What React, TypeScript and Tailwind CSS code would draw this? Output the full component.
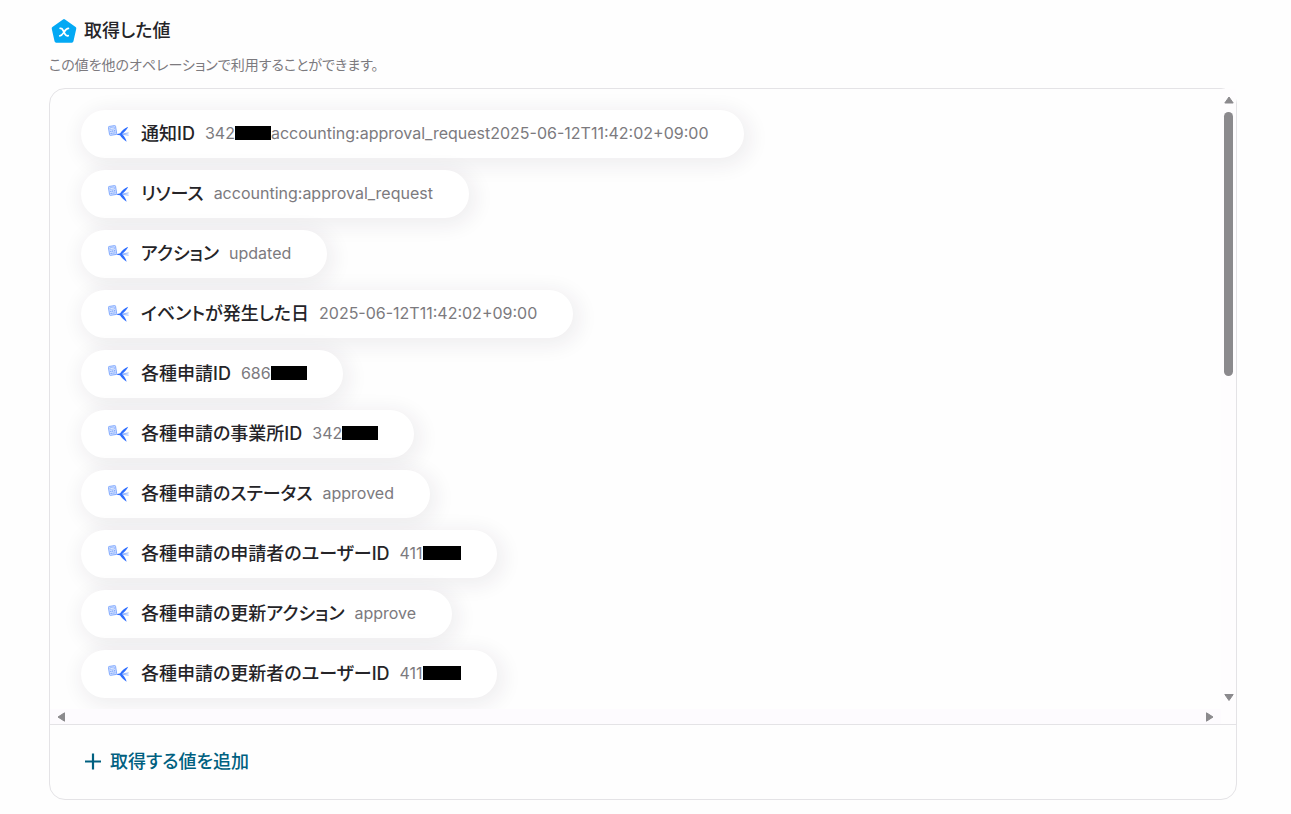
import React from 'react';

type Item = { label: string; value: string; masked?: 'regular' | 'wide'; rest?: string };

const items: Item[] = [
  { label: '通知ID', value: '342', masked: 'regular', rest: 'accounting:approval_request2025-06-12T11:42:02+09:00' },
  { label: 'リソース', value: 'accounting:approval_request' },
  { label: 'アクション', value: 'updated' },
  { label: 'イベントが発生した日', value: '2025-06-12T11:42:02+09:00' },
  { label: '各種申請ID', value: '686', masked: 'regular' },
  { label: '各種申請の事業所ID', value: '342', masked: 'regular' },
  { label: '各種申請のステータス', value: 'approved' },
  { label: '各種申請の申請者のユーザーID', value: '411', masked: 'wide' },
  { label: '各種申請の更新アクション', value: 'approve' },
  { label: '各種申請の更新者のユーザーID', value: '411', masked: 'wide' },
];

function ValueIcon() {
  return (
    <svg className="size-7 shrink-0" viewBox="0 0 28 28" aria-hidden="true">
      <path
        d="M14 3.8 L24.6 11.4 L21.8 24 H6.2 L3.4 11.4 Z"
        fill="#03a9f4"
        stroke="#03a9f4"
        strokeWidth="3.4"
        strokeLinejoin="round"
      />
      <path
        d="M10.2 11.4 C12.2 11 12.5 12.2 13.1 13.4 L15 17.2 C15.7 18.6 16.4 19.2 18.2 18.7 M18.4 11.4 C16.4 11.4 15.3 13.2 14 15.1 C12.7 17.1 11.8 18.8 9.8 18.8"
        fill="none"
        stroke="#fff"
        strokeWidth="1.8"
        strokeLinecap="round"
      />
    </svg>
  );
}

function SwallowIcon() {
  return (
    <svg className="h-[18px] w-[21px] shrink-0" viewBox="0 0 21 18" aria-hidden="true">
      <g transform="rotate(-9 5 5)">
        <rect x="0.9" y="0.9" width="7.2" height="9" rx="0.8" fill="#d3e1ff" stroke="#7fa8ff" strokeWidth="0.9" />
        <rect x="2.3" y="2.3" width="4.4" height="1.7" fill="#f4f7ff" stroke="#7fa8ff" strokeWidth="0.6" />
        <path d="M2.1 6 H7 M2.1 8.1 H7" stroke="#6d9bff" strokeWidth="1.1" strokeDasharray="1.2 0.7" />
      </g>
      <path
        d="M8.2 9.3 C9.8 8.6 11.2 8.5 12.2 8.2 C14 5.6 16.6 3.2 20.2 1.7 C19.2 4.1 17 6.6 14.6 8.5 L14.8 9.8 C16.4 11.8 18.1 14.2 18.6 16.8 C16 15 13.4 12.8 12 10.3 C10.8 10.2 9.4 10 8.2 9.3 Z"
        fill="#2f6fff"
      />
      <path d="M14.2 9 L20.6 7.9 M14.2 9.3 L20.6 10.2" stroke="#7aa4ff" strokeWidth="0.8" />
    </svg>
  );
}

function Arrow({ points }: { points: string }) {
  return (
    <svg className="size-3 shrink-0" viewBox="0 0 12 12" aria-hidden="true">
      <polygon points={points} fill="#8b8a8d" stroke="#8b8a8d" strokeWidth="1" strokeLinejoin="round" />
    </svg>
  );
}

function Pill({ item }: { item: Item }) {
  return (
    <li className="flex h-12 w-max items-center rounded-3xl bg-white pr-9 pl-[27px] shadow-[3px_4px_20px_4px_rgba(45,25,55,0.07)]">
      <SwallowIcon />
      <span className="ml-3 flex items-center gap-2.5">
        <span className="text-[18px] leading-6 font-medium text-[#252428]">{item.label}</span>
        <span className="flex items-center pb-0.5 text-[16px] leading-6 text-[#7c7a7e]">
          {item.value}
          {item.masked && (
            <span className={item.masked === 'wide' ? 'h-3.5 w-[38px] bg-black' : 'h-3.5 w-9 bg-black'} />
          )}
          {item.rest}
        </span>
      </span>
    </li>
  );
}

export default function App() {
  return (
    <main className="min-h-screen bg-[#fefefe] pt-[17px] pr-[54px] pb-3.5 pl-[49px] font-[Inter,'Noto_Sans_CJK_JP',sans-serif] [font-feature-settings:'palt']">
      <header>
        <h1 className="flex h-7 items-center gap-1.5 pl-px text-[18px] leading-7 font-medium text-[#252428]">
          <ValueIcon />
          取得した値
        </h1>
        <p className="mt-2.5 text-[14px] leading-5 text-[#7c7a7e]">
          この値を他のオペレーションで利用することができます。
        </p>
      </header>
      <section className="relative mt-[13px] rounded-2xl border border-[#e4e3e6]">
        <span className="absolute -top-px -right-px h-[11px] w-3 bg-[#fefefe]" />
        <div className="relative flex">
          <div className="min-w-0 flex-1">
            <ul className="flex h-[620px] flex-col gap-3 overflow-hidden rounded-tl-2xl pt-[21px] pl-[31px]">
              {items.map((item) => (
                <Pill key={item.label} item={item} />
              ))}
            </ul>
            <div className="flex h-[15px] items-center justify-between bg-[#fdfbfe] px-1.5">
              <Arrow points="8.5,1.8 8.5,10.2 2,6" />
              <Arrow points="3.5,1.8 3.5,10.2 10,6" />
            </div>
          </div>
          <div className="flex w-[15px] flex-col items-center bg-[#fefdfe] pt-[5px] pb-[21px]">
            <Arrow points="1.8,9 10.2,9 6,3" />
            <div className="mt-1.5 h-[264px] w-[9px] rounded-full bg-[#8b8a8d]" />
            <div className="flex-1" />
            <Arrow points="1.8,3.5 10.2,3.5 6,9.5" />
          </div>
        </div>
        <div className="border-t border-[#e4e3e6] px-[34px] py-[21px]">
          <button type="button" className="flex h-8 items-center gap-2 text-[18px] leading-8 font-medium text-[#006080]">
            <svg className="size-[18px]" viewBox="0 0 18 18" aria-hidden="true">
              <path d="M9 0.5 V16.5 M1 8.5 H17" stroke="currentColor" strokeWidth="2.2" />
            </svg>
            取得する値を追加
          </button>
        </div>
      </section>
    </main>
  );
}
